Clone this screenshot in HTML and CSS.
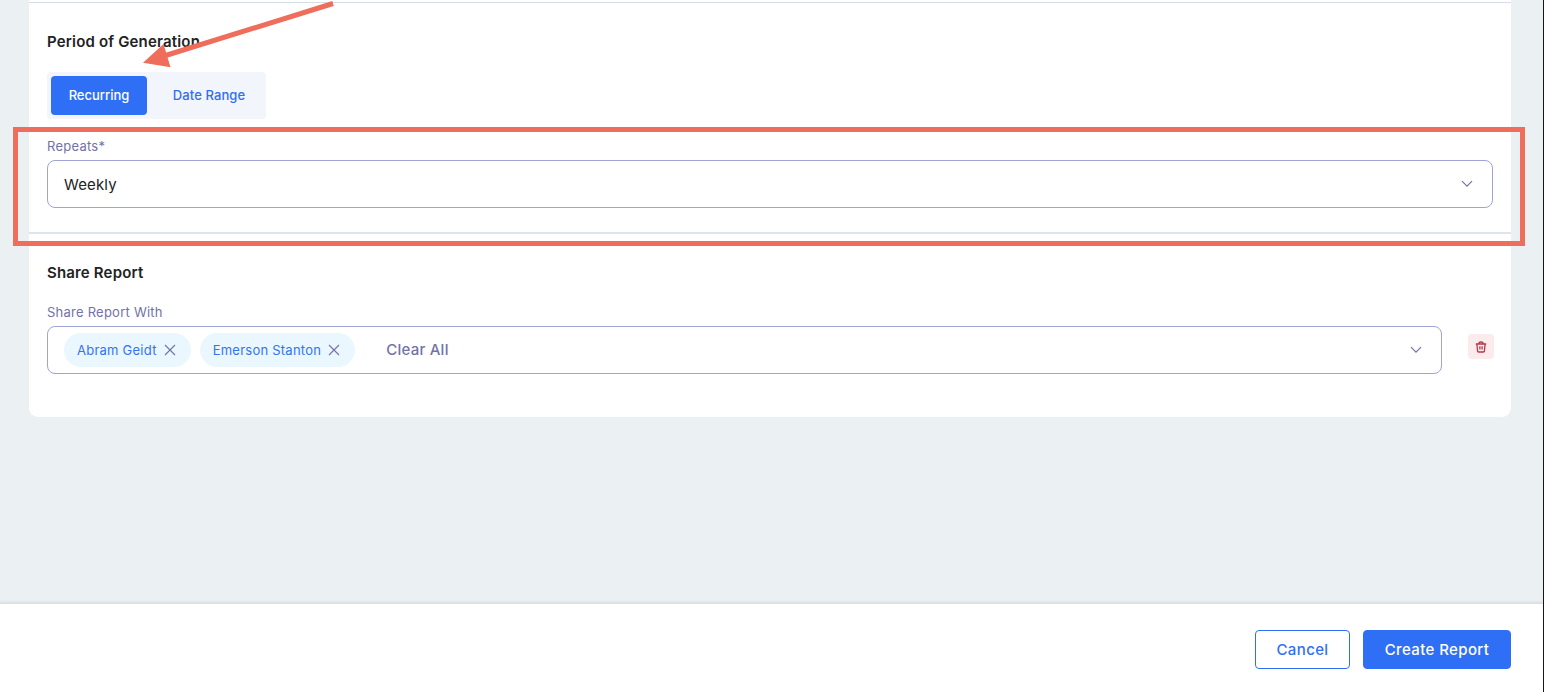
FILE: index.html
```html
<!DOCTYPE html>
<html lang="en">
<head>
    <meta charset="utf-8">
    <title>Create Report</title>
    <link rel="stylesheet" href="styles.css">
</head>
<body>
    <div class="page">
        <main class="content">
            <div class="card">
                <section class="period">
                    <h2>Period of Generation</h2>
                    <div class="toggle">
                        <button class="toggle-btn active">Recurring</button>
                        <button class="toggle-btn">Date Range</button>
                    </div>
                    <label class="label">Repeats*</label>
                    <div class="select">
                        <span class="value">Weekly</span>
                        <svg class="chevron" width="12" height="8" viewBox="0 0 12 8"><path d="M1 1.2 L6 6.2 L11 1.2"/></svg>
                    </div>
                </section>
                <section class="share">
                    <h2>Share Report</h2>
                    <label class="label">Share Report With</label>
                    <div class="share-row">
                        <div class="select">
                            <span class="chip">Abram Geidt
                                <svg class="close" width="12" height="12" viewBox="0 0 12 12"><path d="M1 1 L11 11 M11 1 L1 11"/></svg>
                            </span>
                            <span class="chip">Emerson Stanton
                                <svg class="close" width="12" height="12" viewBox="0 0 12 12"><path d="M1 1 L11 11 M11 1 L1 11"/></svg>
                            </span>
                            <span class="clear">Clear All</span>
                            <svg class="chevron" width="12" height="8" viewBox="0 0 12 8"><path d="M1 1.2 L6 6.2 L11 1.2"/></svg>
                        </div>
                        <button class="delete" aria-label="Delete">
                            <svg width="12" height="12" viewBox="0 0 12 12"><path d="M0.8 3 H11.2 M3.9 2.8 C4 0.4 8 0.4 8.1 2.8 M1.9 3 L2.6 10.2 Q2.7 11 3.5 11 H8.5 Q9.3 11 9.4 10.2 L10.1 3 M4.9 5.3 V8.6 M7.1 5.3 V8.6"/></svg>
                        </button>
                    </div>
                </section>
            </div>
        </main>
        <footer class="footer">
            <button class="btn">Cancel</button>
            <button class="btn primary">Create Report</button>
        </footer>
        <!-- callouts drawn over the form -->
        <div class="highlight"></div>
        <svg class="arrow" width="200" height="75" viewBox="0 0 200 75">
            <path d="M203 3.5 L34 56" stroke="#ef6d5b" stroke-width="5"/>
            <path d="M13 62.8 L33.5 44 L40.5 67.3 Z" fill="#ef6d5b"/>
        </svg>
    </div>
</body>
</html>
```
FILE: styles.css
```css
* {
    box-sizing: border-box;
}
body {
    margin: 0;
    font-family: Inter, "Liberation Sans", sans-serif;
    color: #222;
}
.page {
    position: relative;
    display: flex;
    flex-direction: column;
    height: 692px;
    overflow: hidden;
    background: #ebf0f3;
    border-right: 1px solid #15181b;
}
.content {
    flex: 1;
    padding: 0 32px 0 29px;
}
.card {
    height: 417px;
    background: #fff;
    border-radius: 0 0 9px 9px;
}
button {
    font-family: inherit;
    padding: 0;
    border: none;
    cursor: pointer;
}
h2 {
    margin: 0;
    font-size: 15px;
    line-height: 20px;
    font-weight: 600;
    letter-spacing: 0.17px;
}
.period {
    height: 234px;
    padding: 32px 18px 0 18px;
    border-bottom: 2px solid #dfe4e9;
    background: linear-gradient(#d5dbe8, #d5dbe8) 0 2px / 100% 1px no-repeat;
}
.toggle {
    display: inline-flex;
    height: 47px;
    margin-top: 20px;
    padding: 4px;
    background: #f2f5fb;
    border-radius: 4px;
    vertical-align: top;
}
.toggle-btn {
    width: 96px;
    height: 39px;
    padding-bottom: 1px;
    font-size: 13px;
    font-weight: 500;
    color: #2f6ff6;
    background: none;
    border-radius: 4px;
}
.toggle-btn + .toggle-btn {
    width: 115px;
    padding-left: 9px;
    letter-spacing: 0.1px;
}
.toggle-btn.active {
    color: #fff;
    background: #2f6ff6;
}
.label {
    display: block;
    font-size: 13px;
    line-height: 16px;
    letter-spacing: 0.24px;
    color: #7272a5;
}
.period .label {
    margin-top: 19px;
}
.select {
    display: flex;
    align-items: center;
    flex: 1;
    height: 48px;
    padding: 0 19px 0 16px;
    border: 1px solid #9fa3d6;
    border-radius: 8px;
}
.period .select {
    margin-top: 6px;
}
.value {
    font-size: 15px;
    letter-spacing: 0.15px;
}
.chevron {
    margin-left: auto;
    fill: none;
    stroke: #7272a5;
    stroke-width: 1.2;
}
.share {
    padding: 29px 17px 0 18px;
}
.share .label {
    margin-top: 21px;
}
.share-row {
    display: flex;
    margin-top: 6px;
}
.chip {
    display: flex;
    align-items: center;
    height: 34px;
    padding: 0 15px 0 13px;
    margin-right: 9px;
    font-size: 13px;
    letter-spacing: 0.24px;
    color: #2f75f6;
    background: #ebf7ff;
    border-radius: 17px;
}
.close {
    margin-left: 7px;
    fill: none;
    stroke: #7272a5;
    stroke-width: 1.1;
}
.clear {
    margin-left: 22px;
    padding-bottom: 1px;
    font-size: 15px;
    font-weight: 500;
    letter-spacing: 0.25px;
    color: #7272a5;
}
.delete {
    display: flex;
    align-items: center;
    justify-content: center;
    width: 26px;
    height: 25px;
    margin: 8px 0 0 26px;
    background: #fbebec;
    border-radius: 4px;
}
.delete svg {
    fill: none;
    stroke: #b23a4b;
    stroke-width: 1.3;
}
.footer {
    display: flex;
    justify-content: flex-end;
    gap: 13px;
    height: 90px;
    padding: 26px 32px 0;
    background: #fff;
    border-top: 2px solid #dde1e6;
    box-shadow: 0 -1px 3px rgba(0, 0, 0, 0.04);
}
.btn {
    width: 95px;
    height: 39px;
    font-size: 15px;
    font-weight: 500;
    letter-spacing: 0.38px;
    color: #2f6ff6;
    background: #fff;
    border: 1px solid #2f6ff6;
    border-radius: 4px;
}
.primary {
    width: 148px;
    color: #fff;
    background: #2f6ff6;
}
.highlight {
    position: absolute;
    left: 13px;
    top: 127px;
    width: 1512px;
    height: 119px;
    border: 5px solid #ef6d5b;
}
.arrow {
    position: absolute;
    left: 130px;
    top: 0;
    overflow: visible;
}
```
